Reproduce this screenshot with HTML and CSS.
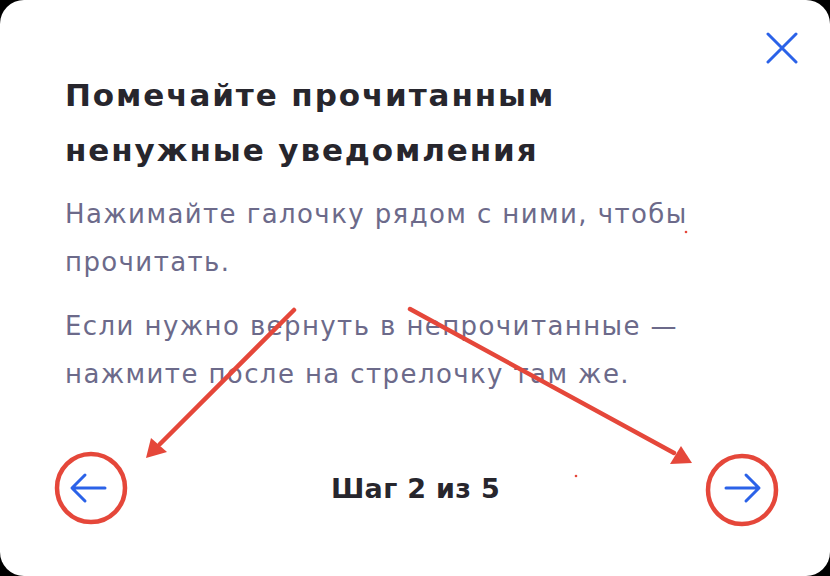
FILE: index.html
```html
<!DOCTYPE html>
<html lang="ru">
<head>
    <meta charset="UTF-8">
    <meta name="viewport" content="width=device-width, initial-scale=1.0">
    <title>Подсказка — уведомления</title>
    <link rel="stylesheet" href="styles.css">
</head>
<body>
    <div class="tour-card">
        <button class="close-button" aria-label="Закрыть">
            <svg width="32" height="32" viewBox="0 0 32 32" fill="none" stroke="currentColor" stroke-width="3" stroke-linecap="round">
                <path d="M2 2L30 30M30 2L2 30"/>
            </svg>
        </button>

        <h2 class="tour-title">Помечайте прочитанным ненужные уведомления</h2>
        <p class="tour-text">Нажимайте галочку рядом с ними, чтобы прочитать.</p>
        <p class="tour-text">Если нужно вернуть в непрочитанные — нажмите после на стрелочку там же.</p>

        <div class="tour-footer">
            <button class="nav-button" aria-label="Назад">
                <svg width="40" height="32" viewBox="0 0 40 32" fill="none" stroke="currentColor" stroke-width="3" stroke-linecap="round" stroke-linejoin="round">
                    <path d="M36 16H4M16 3L3 16L16 29"/>
                </svg>
            </button>
            <span class="tour-step">Шаг 2 из 5</span>
            <button class="nav-button" aria-label="Вперёд">
                <svg width="40" height="32" viewBox="0 0 40 32" fill="none" stroke="currentColor" stroke-width="3" stroke-linecap="round" stroke-linejoin="round">
                    <path d="M4 16H36M24 3L37 16L24 29"/>
                </svg>
            </button>
        </div>

        <!-- red hand-drawn marks over the buttons -->
        <svg class="marks" width="830" height="576" viewBox="0 0 830 576" fill="none">
            <g stroke="#e5473a" stroke-width="4.5" stroke-linecap="round">
                <path d="M294 310L160 444"/>
                <path d="M410 309L674 453"/>
                <circle cx="91" cy="488" r="34"/>
                <circle cx="742" cy="490" r="34"/>
            </g>
            <g fill="#e5473a">
                <path d="M146 458L151 438L167 452Z"/>
                <path d="M692 463L670 464L681 446Z"/>
                <circle cx="686" cy="232" r="1.3"/>
                <circle cx="576" cy="476" r="1.3"/>
            </g>
        </svg>
    </div>
</body>
</html>
```

FILE: styles.css
```css
* {
    margin: 0;
    padding: 0;
    box-sizing: border-box;
}

body {
    background: #000;
    font-family: 'DejaVu Sans', sans-serif;
}

.tour-card {
    position: relative;
    width: 830px;
    height: 576px;
    background: #fff;
    border-radius: 24px;
    padding: 68px 64px 0 65px;
    display: flex;
    flex-direction: column;
}

.close-button {
    position: absolute;
    top: 32px;
    right: 32px;
    border: none;
    background: none;
    color: #2b62e8;
    display: flex;
    cursor: pointer;
}

.tour-title {
    font-size: 31px;
    font-weight: 700;
    line-height: 55px;
    letter-spacing: 1.9px;
    color: #27262d;
    max-width: 600px;
    margin-bottom: 12px;
}

.tour-text {
    font-size: 26px;
    line-height: 48px;
    letter-spacing: 1.4px;
    color: #6c6a8a;
    max-width: 660px;
    margin-bottom: 16px;
}

.tour-footer {
    flex: 1;
    display: flex;
    justify-content: space-between;
    align-items: center;
    padding-bottom: 14px;
}

.nav-button {
    width: 48px;
    height: 48px;
    border: none;
    background: none;
    color: #2b62e8;
    display: flex;
    align-items: center;
    justify-content: center;
    cursor: pointer;
}

.tour-step {
    font-size: 27px;
    font-weight: 700;
    letter-spacing: 0.3px;
    color: #27262d;
}

.marks {
    position: absolute;
    top: 0;
    left: 0;
    pointer-events: none;
}
```
